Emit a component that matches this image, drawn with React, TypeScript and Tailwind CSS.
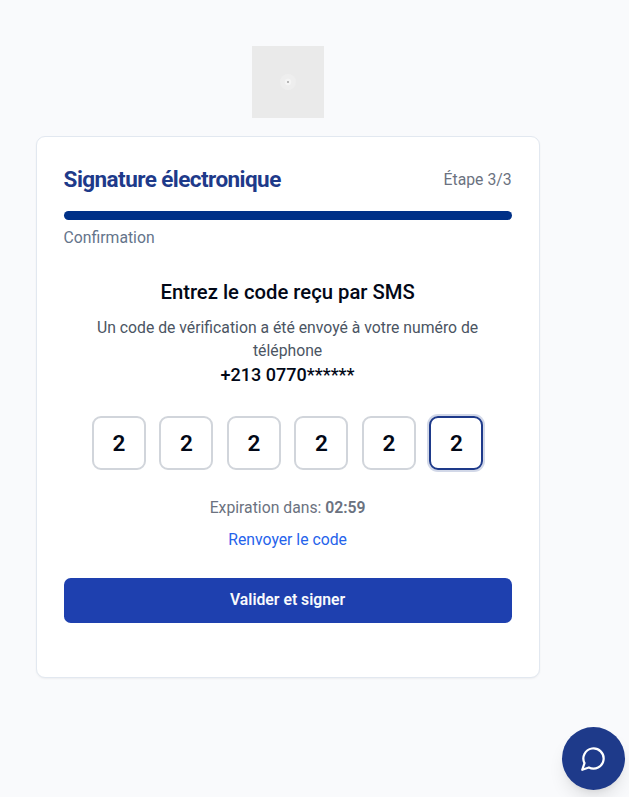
import { useState } from "react";

function Logo() {
  return (
    <div className="flex h-[72px] w-[72px] items-center justify-center bg-[#eaeaea]">
      <svg width="18" height="18" viewBox="0 0 18 18" aria-hidden="true">
        <circle cx="9" cy="9" r="8" fill="#eeeeee" />
        <circle cx="9" cy="9" r="3.2" fill="#f5f5f5" />
        <rect x="8" y="8" width="2" height="2" fill="#b8b8b8" />
      </svg>
    </div>
  );
}

function CodeInput() {
  const [digits] = useState(["2", "2", "2", "2", "2", "2"]);
  return (
    <div className="mt-[27.75px] flex justify-center gap-[13.5px]">
      {digits.map((digit, i) => (
        <div
          key={i}
          className={
            i === digits.length - 1
              ? "flex size-[54px] items-center justify-center rounded-[9px] border-2 border-[#1e3a8a] text-[22.5px] font-semibold shadow-[0_0_0_2px_#d2d8e8]"
              : "flex size-[54px] items-center justify-center rounded-[9px] border-2 border-[#d1d5db] text-[22.5px] font-semibold"
          }
        >
          {digit}
        </div>
      ))}
    </div>
  );
}

export default function App() {
  return (
    <main className="relative h-[797px] w-[629px] overflow-hidden bg-[#f9fafc] pt-[46px] pl-[35.6px] font-['Roboto',sans-serif] text-[15.75px] leading-[22.5px] text-[#020817]">
      <div className="flex w-[504px] flex-col items-center">
        <Logo />
        <section className="mt-[18px] h-[542px] w-full rounded-[9px] border border-[#e2e8f0] bg-white px-[27px] pt-[26px] shadow-[0_1px_2px_rgba(0,0,0,0.05)]">
          <div className="flex h-[32px] items-center justify-between">
            <h1 className="text-[22.5px] font-bold tracking-[-0.5625px] text-[#1e3a8a]">Signature électronique</h1>
            <span className="pt-[3px] text-[#6b7280]">Étape 3/3</span>
          </div>
          <div className="mt-[16px] h-[9px] rounded-full bg-[#003087]" />
          <p className="mt-[7px] text-[#64748b]">Confirmation</p>
          <div className="mt-[27.25px] text-center">
            <h2 className="text-[20.25px] leading-[31.5px] font-medium">Entrez le code reçu par SMS</h2>
            <p className="mt-[8.75px] px-[27px] text-[#4b5563]">Un code de vérification a été envoyé à votre numéro de téléphone</p>
            <p className="-mt-[0.75px] text-[18px] leading-[27px] font-medium">+213 0770******</p>
            <CodeInput />
            <p className="mt-[27px] text-[#6b7280]">
              Expiration dans: <span className="font-semibold">02:59</span>
            </p>
            <button className="mt-[9px] block w-full text-[#2563eb]">Renvoyer le code</button>
            <button className="mt-[27px] block h-[45px] w-full rounded-[6.75px] bg-[#1e40af] font-semibold text-[#f8fafc]">
              Valider et signer
            </button>
          </div>
        </section>
      </div>
      <button
        aria-label="Chat"
        className="absolute top-[727px] left-[562px] flex size-[63px] items-center justify-center rounded-full bg-[#1e3a8a] text-white shadow-[0_11px_17px_-3px_rgba(0,0,0,0.1),0_4px_7px_-4px_rgba(0,0,0,0.1)]"
      >
        <svg width="27" height="27" viewBox="0 0 24 24" fill="none" stroke="currentColor" strokeWidth="2" strokeLinecap="round" strokeLinejoin="round">
          <path d="M7.9 20A9 9 0 1 0 4 16.1L2 22Z" />
        </svg>
      </button>
    </main>
  );
}
